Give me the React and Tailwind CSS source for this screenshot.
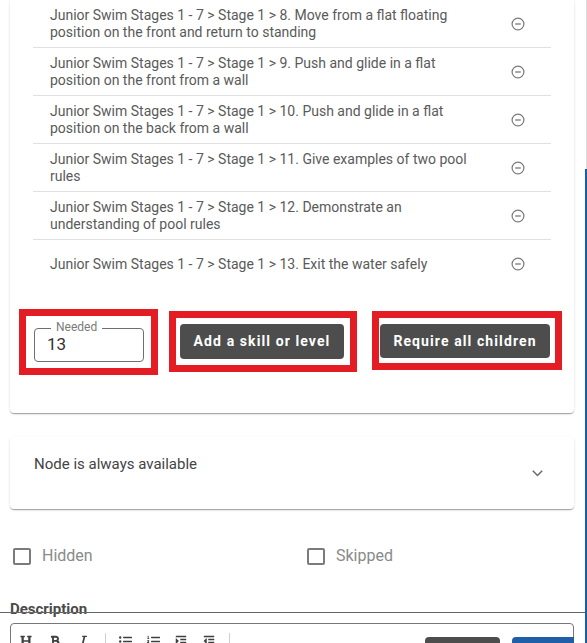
import React from "react";
import { FaHeading, FaBold, FaItalic, FaListUl, FaListOl, FaIndent, FaOutdent } from "react-icons/fa";

const items = [
  "Junior Swim Stages 1 - 7 > Stage 1 > 8. Move from a flat floating position on the front and return to standing",
  "Junior Swim Stages 1 - 7 > Stage 1 > 9. Push and glide in a flat position on the front from a wall",
  "Junior Swim Stages 1 - 7 > Stage 1 > 10. Push and glide in a flat position on the back from a wall",
  "Junior Swim Stages 1 - 7 > Stage 1 > 11. Give examples of two pool rules",
  "Junior Swim Stages 1 - 7 > Stage 1 > 12. Demonstrate an understanding of pool rules",
  "Junior Swim Stages 1 - 7 > Stage 1 > 13. Exit the water safely",
];

function MinusCircle() {
  return (
    <svg width="14" height="14" viewBox="0 0 14 14" fill="none">
      <circle cx="7" cy="7" r="5.9" stroke="#7a7a7a" strokeWidth="1.2" />
      <line x1="4.2" y1="7" x2="9.8" y2="7" stroke="#7a7a7a" strokeWidth="1.3" />
    </svg>
  );
}

function Checkbox({ label }) {
  return (
    <div className="flex items-center">
      <div className="w-[18px] h-[17px] rounded-[2px] border-2 border-[#7b7b7b]" />
      <span className="ml-[11px] text-[16px] leading-[20px] text-[#8a8a8a]">{label}</span>
    </div>
  );
}

const cardShadow =
  "shadow-[0_2px_1px_-1px_rgba(0,0,0,0.2),0_1px_1px_0_rgba(0,0,0,0.14),0_1px_3px_0_rgba(0,0,0,0.12)]";

export default function App() {
  return (
    <div className="w-[587px] h-[643px] overflow-hidden bg-white flex font-['Roboto',sans-serif]">
      <div className="w-[585px] flex flex-col shrink-0">
        {/* requirement card */}
        <div className={`shrink-0 ml-[10px] w-[564px] bg-white rounded-b-[4px] ${cardShadow} pb-[38px]`}>
          <div className="px-[23px]">
            {items.map((t, i) => (
              <div
                key={i}
                className={`h-[48px] flex items-center justify-between ${
                  i < items.length - 1 ? "border-b border-[#e0e0e0]" : ""
                }`}
              >
                <div className="pl-[17px] w-[442px] text-[14px] leading-[17px] text-[#5a5a5a]">{t}</div>
                <div className="mr-[26px] flex items-center">
                  <MinusCircle />
                </div>
              </div>
            ))}
          </div>

          <div className="flex items-start mt-[21px] pl-[9px]">
            <div className="w-[139px] h-[66px] border-[7px] border-[#e41c24] pl-[8px] pt-[12px]">
              <div className="relative w-[110px] h-[34px] border border-[#6f6f6f] rounded-[4px] flex items-center pl-[12px]">
                <span className="absolute left-[16px] -top-[9px] px-[5px] bg-white text-[12px] leading-[14px] text-[#7a7a7a]">
                  Needed
                </span>
                <span className="text-[17px] text-[#333]">13</span>
              </div>
            </div>
            <div className="ml-[11px] mt-[2px] w-[188px] h-[61px] border-[7px] border-[#e41c24] pl-[4px] pt-[6px]">
              <div className="w-[164px] h-[35px] rounded-[4px] bg-[#4d4d4d] text-white text-[14px] font-bold tracking-[1.1px] flex items-center justify-center">
                Add a skill or level
              </div>
            </div>
            <div className="ml-[15px] mt-[2px] w-[190px] h-[59px] border-[7px] border-[#e41c24] pl-[1px] pt-[6px]">
              <div className="w-[170px] h-[34px] rounded-[4px] bg-[#4d4d4d] text-white text-[14px] font-bold tracking-[1.1px] flex items-center justify-center">
                Require all children
              </div>
            </div>
          </div>
        </div>

        {/* availability accordion */}
        <div className={`shrink-0 mt-[24px] ml-[10px] w-[564px] h-[72px] bg-white rounded-[4px] ${cardShadow} flex justify-between pl-[24px] pr-[31px]`}>
          <div className="mt-[17px] text-[15px] leading-[20px] text-[#444]">Node is always available</div>
          <div className="self-center">
            <svg width="11" height="7" viewBox="0 0 11 7" fill="none">
              <path d="M0.8 0.8 L5.5 5.5 L10.2 0.8" stroke="#6a6a6a" strokeWidth="1.5" />
            </svg>
          </div>
        </div>

        {/* flags */}
        <div className="shrink-0 mt-[37px] pl-[13px] flex">
          <div className="w-[294px]">
            <Checkbox label="Hidden" />
          </div>
          <Checkbox label="Skipped" />
        </div>

        {/* description */}
        <div className="shrink-0 mt-[33px] pl-[10px] text-[15px] leading-[20px] font-bold text-[#4a4a4a]">Description</div>
        <div className="shrink-0 h-px bg-[#666] -mt-[7px]" />

        <div className="shrink-0 mt-[10px] ml-[10px] w-[564px] h-[40px] border border-[#777] rounded-[4px] flex justify-between">
          <div className="flex items-start pt-[11px] text-[#3f3f3f]">
            <div className="w-[29px] flex justify-center"><FaHeading size={12} /></div>
            <div className="w-[29px] flex justify-center"><FaBold size={12} /></div>
            <div className="w-[29px] flex justify-center"><FaItalic size={11} /></div>
            <div className="ml-[7px] w-px h-[20px] -mt-[2px] bg-[#d0d0d0]" />
            <div className="ml-[5px] w-[28px] flex justify-center"><FaListUl size={13} /></div>
            <div className="w-[28px] flex justify-center"><FaListOl size={13} /></div>
            <div className="w-[28px] flex justify-center"><FaIndent size={12} /></div>
            <div className="w-[28px] flex justify-center"><FaOutdent size={12} /></div>
            <div className="ml-[6px] w-px h-[20px] -mt-[2px] bg-[#d0d0d0]" />
          </div>
          <div className="flex items-start pt-[13px] -mr-px">
            <div className="w-[75px] h-[30px] rounded-t-[4px] bg-[#4d4d4d]" />
            <div className="ml-[12px] w-[62px] h-[30px] rounded-tl-[4px] bg-[#1e5fa8]" />
          </div>
        </div>
      </div>

      {/* edge of neighbouring panel */}
      <div className="w-[2px] flex flex-col shrink-0">
        <div className="h-[169px] border-r border-[#dcdcdc]" />
        <div className="flex-1 bg-[#1b5ca8]" />
      </div>
    </div>
  );
}
